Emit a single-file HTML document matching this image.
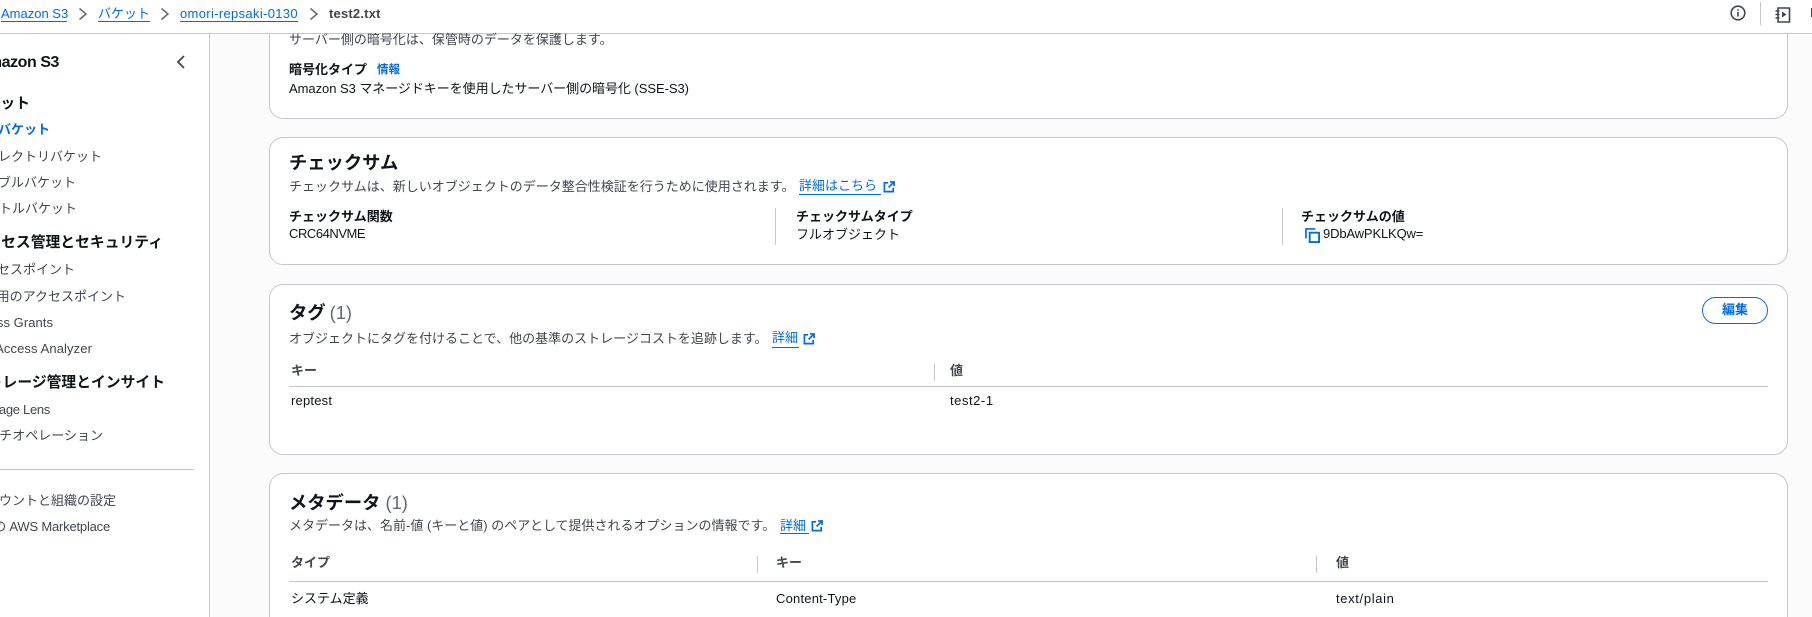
<!DOCTYPE html>
<html lang="ja"><head><meta charset="utf-8"><title>test2.txt</title>
<style>
html,body{margin:0;padding:0;width:1812px;height:617px;overflow:hidden;background:#fbfbfb}
body{position:relative;font-family:"Liberation Sans","Noto Sans CJK JP",sans-serif;font-size:13px;color:#0f141a}
#p{position:absolute;left:0;top:0;width:1812px;height:617px;overflow:hidden}
.t{position:absolute;white-space:nowrap;line-height:20px;height:20px}
.b{font-weight:700}.g{color:#424650}.bl{color:#006ce0}
.h{font-size:18.3px;font-weight:700;line-height:26px;height:26px}
.c{position:absolute;left:269px;width:1517px;background:#fff;border:1px solid #c6c6cd;border-radius:14px;box-sizing:content-box}
.l{position:absolute;background:#c6c6cd}
.u{position:absolute;height:1px;background:#006ce0}
.la{letter-spacing:-.45px}
svg{position:absolute}
.th{color:#414750;font-weight:700}
.sh{font-size:14.8px}
</style></head><body><div id="p">
<div style="position:absolute;left:0;top:0;width:209px;height:617px;background:#fff;border-right:1px solid #c6c6cd"></div>

<div class="c" style="top:20px;height:98px;border-top:none;border-radius:0 0 14px 14px"></div>
<div class="c" style="top:137px;height:126px"></div>
<div class="c" style="top:284px;height:169px"></div>
<div class="c" style="top:473px;height:143px;border-bottom:none;border-radius:14px 14px 0 0"></div>

<div style="position:absolute;left:0;top:0;width:1812px;height:33px;background:#fff;border-bottom:1px solid #c6c6cd"></div>

<!-- breadcrumbs -->
<div class="t bl" style="left:1px;top:4px">Amazon S3</div><div class="u" style="left:1px;width:66px;top:21px"></div>
<svg style="left:78px;top:7px" width="10" height="14" viewBox="0 0 10 14"><path d="M1.500 1.500l6.500 5.500-6.500 5.500" fill="none" stroke="#656871" stroke-width="1.500"/></svg>
<div class="t bl" style="left:98px;top:4px">バケット</div><div class="u" style="left:98px;width:52px;top:21px"></div>
<svg style="left:160px;top:7px" width="10" height="14" viewBox="0 0 10 14"><path d="M1.500 1.500l6.500 5.500-6.500 5.500" fill="none" stroke="#656871" stroke-width="1.500"/></svg>
<div class="t bl" style="left:180px;top:4px;letter-spacing:.33px">omori-repsaki-0130</div><div class="u" style="left:180px;width:118px;top:21px"></div>
<svg style="left:309px;top:7px" width="10" height="14" viewBox="0 0 10 14"><path d="M1.500 1.500l6.500 5.500-6.500 5.500" fill="none" stroke="#656871" stroke-width="1.500"/></svg>
<div class="t b" style="left:329px;top:4px;color:#424650;letter-spacing:.2px">test2.txt</div>

<!-- top right icons -->
<svg style="left:1730px;top:5px" width="16" height="16" viewBox="0 0 16 16"><circle cx="8" cy="8" r="6.800" fill="none" stroke="#424650" stroke-width="1.600"/><path d="M8 7v4.500M8 4.300v1.400" stroke="#424650" stroke-width="1.600" fill="none"/></svg>
<div class="l" style="left:1760px;top:2px;width:1px;height:23px"></div>
<svg style="left:1775px;top:6px" width="16" height="17" viewBox="0 0 16 17"><path d="M3 2h11.500v14H3z" fill="none" stroke="#424650" stroke-width="1.600"/><path d="M0.500 5h4M0.500 8.500h4M0.500 12h4" stroke="#424650" stroke-width="1.500"/><path d="M7 5.500l4.500 3-4.500 3z" fill="#424650"/></svg>
<div class="l" style="left:1811px;top:8px;width:1px;height:9px;background:#424650"></div>

<!-- sidebar -->
<div class="t b la" style="right:1753px;top:50px;font-size:16px;line-height:26px;height:26px">Amazon S3</div>
<svg style="left:176px;top:54px" width="10" height="16" viewBox="0 0 10 16"><path d="M8 2L2 8l6 6" fill="none" stroke="#424650" stroke-width="1.800"/></svg>
<div class="t b sh" style="right:1782px;top:94px">バケット</div>
<div class="t b bl" style="right:1762px;top:120px">汎用バケット</div>
<div class="t g" style="right:1710px;top:147px">ディレクトリバケット</div>
<div class="t g" style="right:1736px;top:173px">テーブルバケット</div>
<div class="t g" style="right:1735px;top:199px">ベクトルバケット</div>
<div class="t b sh" style="right:1649px;top:233px">アクセス管理とセキュリティ</div>
<div class="t g" style="right:1737px;top:260px">アクセスポイント</div>
<div class="t g" style="right:1686px;top:287px">汎用のアクセスポイント</div>
<div class="t g" style="right:1759px;top:313px;letter-spacing:.05px">Access Grants</div>
<div class="t g" style="right:1720px;top:339px;letter-spacing:.1px">IAM Access Analyzer</div>
<div class="t b sh" style="right:1647px;top:373px">ストレージ管理とインサイト</div>
<div class="t g" style="right:1762px;top:400px;letter-spacing:-.3px">Storage Lens</div>
<div class="t g" style="right:1709px;top:426px">バッチオペレーション</div>
<div class="l" style="left:0;top:469px;width:194px;height:1px"></div>
<div class="t g" style="right:1696px;top:491px">アカウントと組織の設定</div>
<div class="t g" style="right:1702px;top:517px;letter-spacing:-.2px">S3 の AWS Marketplace</div>

<!-- card 1 -->
<div class="t g" style="left:289px;top:30px">サーバー側の暗号化は、保管時のデータを保護します。</div>
<div class="t b" style="left:289px;top:60px">暗号化タイプ</div>
<div class="t b bl" style="left:377px;top:60px;font-size:11.500px">情報</div>
<div class="t" style="left:289px;top:79px;letter-spacing:-.05px">Amazon S3 マネージドキーを使用したサーバー側の暗号化 (SSE-S3)</div>

<!-- card 2 -->
<div class="t h" style="left:289px;top:150px">チェックサム</div>
<div class="t g" style="left:289px;top:177px">チェックサムは、新しいオブジェクトのデータ整合性検証を行うために使用されます。</div>
<div class="t bl" style="left:799px;top:176px">詳細はこちら</div><div class="u" style="left:799px;width:82px;top:194px"></div>
<svg style="left:883px;top:181px" width="12" height="12" viewBox="0 0 13 13"><path d="M5.500 2H1.500v9.500h9.500V7.500" fill="none" stroke="#006ce0" stroke-width="1.800"/><path d="M7.500 1h4.500v4.500M12 1L6 7" fill="none" stroke="#006ce0" stroke-width="1.800"/></svg>
<div class="t b" style="left:289px;top:207px">チェックサム関数</div>
<div class="t la" style="left:289px;top:224px">CRC64NVME</div>
<div class="l" style="left:775px;top:208px;width:1px;height:37px"></div>
<div class="t b" style="left:796px;top:207px">チェックサムタイプ</div>
<div class="t" style="left:796px;top:225px">フルオブジェクト</div>
<div class="l" style="left:1282px;top:208px;width:1px;height:37px"></div>
<div class="t b" style="left:1301px;top:207px">チェックサムの値</div>
<svg style="left:1305px;top:228px" width="15" height="15" viewBox="0 0 16 16"><path d="M1 11V1h10" fill="none" stroke="#006ce0" stroke-width="1.800"/><rect x="5" y="5" width="10" height="10" fill="none" stroke="#006ce0" stroke-width="2"/></svg>
<div class="t" style="left:1323px;top:224px;letter-spacing:-.15px">9DbAwPKLKQw=</div>

<!-- card 3 -->
<div class="t h" style="left:289px;top:300px">タグ <span style="font-weight:400;color:#656871;margin-left:-1px">(1)</span></div>
<div class="t g" style="left:289px;top:329px">オブジェクトにタグを付けることで、他の基準のストレージコストを追跡します。</div>
<div class="t bl" style="left:772px;top:328px">詳細</div><div class="u" style="left:772px;width:27px;top:347px"></div>
<svg style="left:803px;top:333px" width="12" height="12" viewBox="0 0 13 13"><path d="M5.500 2H1.500v9.500h9.500V7.500" fill="none" stroke="#006ce0" stroke-width="1.800"/><path d="M7.500 1h4.500v4.500M12 1L6 7" fill="none" stroke="#006ce0" stroke-width="1.800"/></svg>
<div style="position:absolute;left:1702px;top:297px;width:64px;height:25px;border:1px solid #006ce0;border-radius:14px;background:#fff"></div>
<div class="t b bl" style="left:1722px;top:300px">編集</div>
<div class="t th" style="left:291px;top:361px">キー</div>
<div class="l" style="left:934px;top:364px;width:1px;height:17px"></div>
<div class="t th" style="left:950px;top:361px">値</div>
<div class="l" style="left:289px;top:386px;width:1479px;height:1px"></div>
<div class="t" style="left:291px;top:391px;letter-spacing:.2px">reptest</div>
<div class="t" style="left:950px;top:391px;letter-spacing:.55px">test2-1</div>

<!-- card 4 -->
<div class="t h" style="left:289px;top:490px">メタデータ <span style="font-weight:400;color:#656871">(1)</span></div>
<div class="t g" style="left:289px;top:516px">メタデータは、名前-値 (キーと値) のペアとして提供されるオプションの情報です。</div>
<div class="t bl" style="left:780px;top:516px">詳細</div><div class="u" style="left:780px;width:29px;top:533px"></div>
<svg style="left:811px;top:520px" width="12" height="12" viewBox="0 0 13 13"><path d="M5.500 2H1.500v9.500h9.500V7.500" fill="none" stroke="#006ce0" stroke-width="1.800"/><path d="M7.500 1h4.500v4.500M12 1L6 7" fill="none" stroke="#006ce0" stroke-width="1.800"/></svg>
<div class="t th" style="left:291px;top:553px">タイプ</div>
<div class="l" style="left:757px;top:556px;width:1px;height:17px"></div>
<div class="t th" style="left:776px;top:553px">キー</div>
<div class="l" style="left:1316px;top:556px;width:1px;height:17px"></div>
<div class="t th" style="left:1336px;top:553px">値</div>
<div class="l" style="left:289px;top:581px;width:1479px;height:1px"></div>
<div class="t" style="left:291px;top:589px">システム定義</div>
<div class="t" style="left:776px;top:589px;letter-spacing:.2px">Content-Type</div>
<div class="t" style="left:1336px;top:589px;letter-spacing:.65px">text/plain</div>
</div></body></html>
